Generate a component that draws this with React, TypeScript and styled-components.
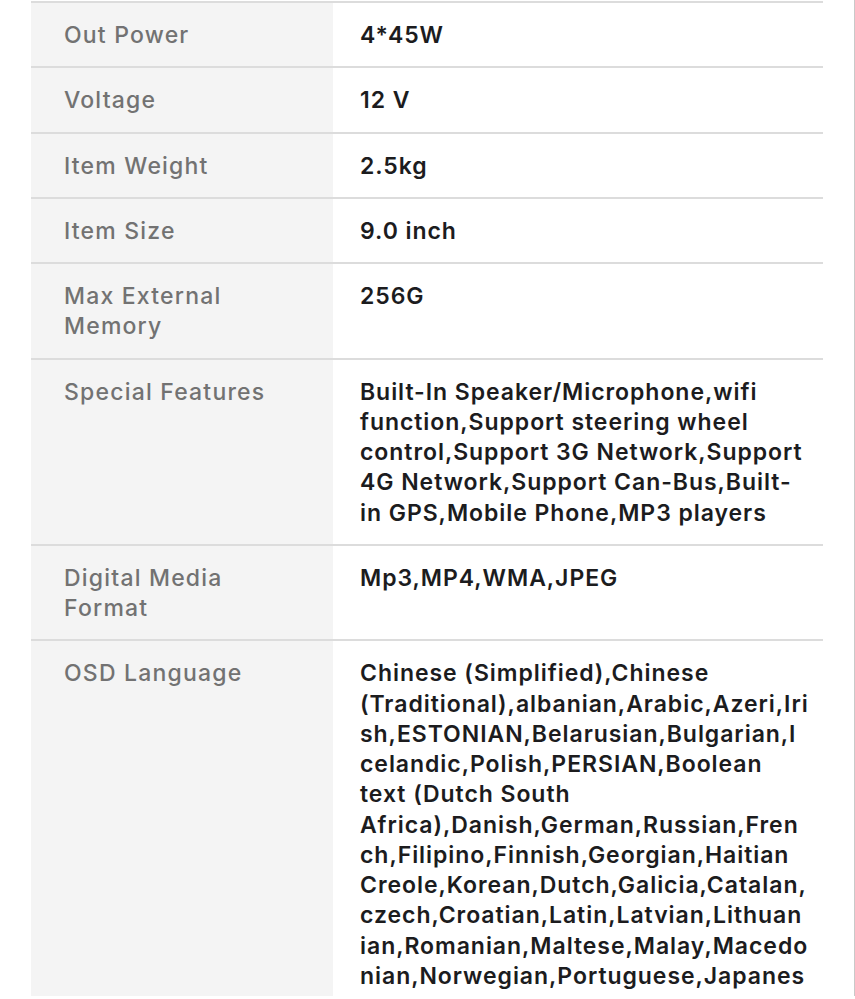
import styled, { createGlobalStyle } from 'styled-components';

const GlobalStyle = createGlobalStyle`
	html, body {
		margin: 0;
		padding: 0;
		background: #ffffff;
	}
	body {
		font-family: Inter, "Noto Sans", "Liberation Sans", sans-serif;
		-webkit-font-smoothing: antialiased;
	}
`;

const Page = styled.div`
	box-sizing: border-box;
	width: 855px;
	height: 996px;
	overflow: hidden;
	padding: 1px 31px 0;
	border-right: 1px solid #c9c9c9;
`;

const Table = styled.div`
	display: grid;
	grid-template-columns: 302px 490px;
	border-top: 2px solid #dcdcdc;
`;

const Label = styled.div`
	box-sizing: border-box;
	background: #f4f4f4;
	color: #727272;
	font-size: 23px;
	font-weight: 500;
	letter-spacing: 1.2px;
	line-height: 30.25px;
	padding: 17px 20px 16px 33px;
	border-bottom: 2px solid #dcdcdc;
`;

const Value = styled.div`
	box-sizing: border-box;
	color: #1c1c1e;
	font-size: 23px;
	font-weight: 600;
	letter-spacing: 0.95px;
	line-height: 30.25px;
	padding: 17px 14px 16px 27px;
	border-bottom: 2px solid #dcdcdc;
	overflow-wrap: anywhere;
`;

const specs: [string, string][] = [
	['Out Power', '4*45W'],
	['Voltage', '12 V'],
	['Item Weight', '2.5kg'],
	['Item Size', '9.0 inch'],
	['Max External Memory', '256G'],
	[
		'Special Features',
		'Built-In Speaker/Microphone,wifi function,Support steering wheel control,Support 3G Network,Support 4G Network,Support Can-Bus,Built-in GPS,Mobile Phone,MP3 players',
	],
	['Digital Media Format', 'Mp3,MP4,WMA,JPEG'],
	[
		'OSD Language',
		'Chinese (Simplified),Chinese (Traditional),albanian,Arabic,Azeri,Irish,ESTONIAN,Belarusian,Bulgarian,Icelandic,Polish,PERSIAN,Boolean text (Dutch South Africa),Danish,German,Russian,French,Filipino,Finnish,Georgian,Haitian Creole,Korean,Dutch,Galicia,Catalan,czech,Croatian,Latin,Latvian,Lithuanian,Romanian,Maltese,Malay,Macedonian,Norwegian,Portuguese,Japanese,Swedish,Serbian,Slovak,Slovenian,Thai,Turkish,Ukrainian,Spanish,Hebrew,Greek,Hungarian,Italian,Hindi,Indonesian,English,Vietnamese',
	],
];

const App = () => {
	return (
		<Page>
			<GlobalStyle />
			<Table>
				{specs.map(([label, value]) => (
					<>
						<Label key={label + '-l'}>{label}</Label>
						<Value key={label + '-v'}>{value}</Value>
					</>
				))}
			</Table>
		</Page>
	);
};

export default App;
